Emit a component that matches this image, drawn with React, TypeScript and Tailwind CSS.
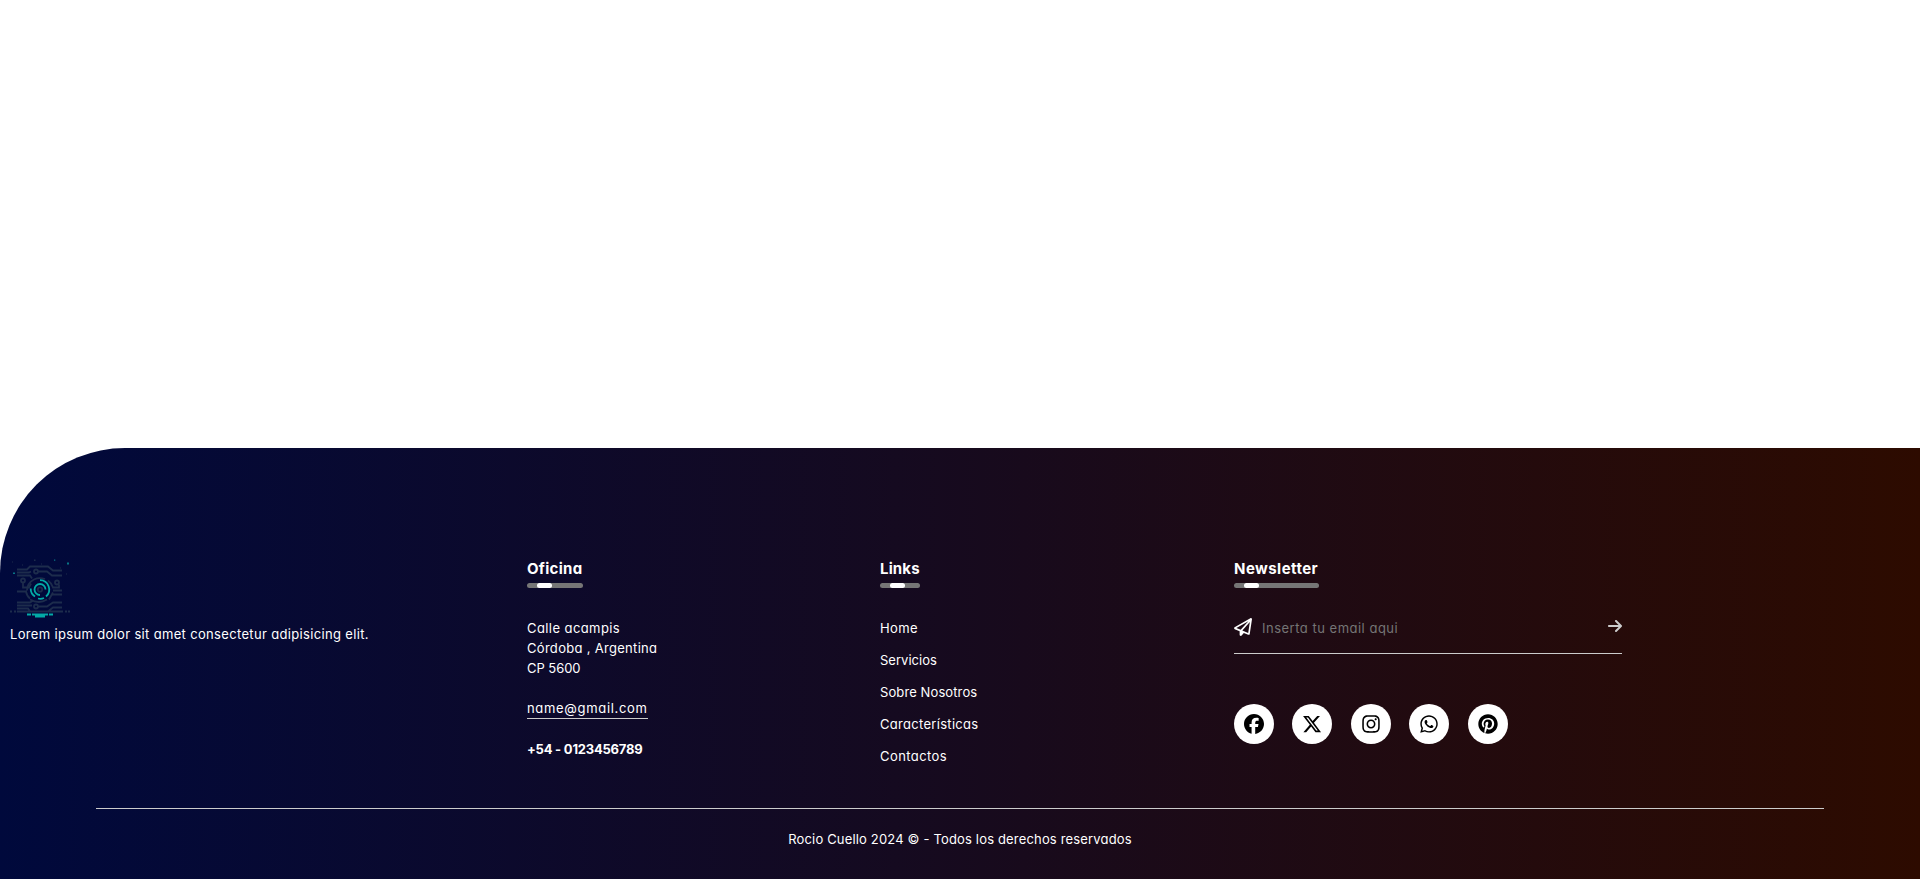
import { FaArrowRight, FaFacebook, FaInstagram, FaPinterest, FaRegPaperPlane, FaWhatsapp, FaXTwitter } from "react-icons/fa6";

const links = [
  { label: "Home", style: "tracking-[0.4px]" },
  { label: "Servicios", style: "tracking-[0.03px]" },
  { label: "Sobre Nosotros", style: "tracking-[0.1px]" },
  { label: "Características", style: "tracking-[0.3px]" },
  { label: "Contactos", style: "tracking-[0.42px]" },
];

const socials = [
  { name: "facebook", Icon: FaFacebook },
  { name: "x", Icon: FaXTwitter },
  { name: "instagram", Icon: FaInstagram },
  { name: "whatsapp", Icon: FaWhatsapp },
  { name: "pinterest", Icon: FaPinterest },
];

function Logo() {
  return (
    <svg width="60" height="60" viewBox="0 -1.5 60 60" fill="none" strokeWidth="1.8" className="block">
      <g stroke="#1d2c4c">
        <path d="M7 10h10l3-3h18l5 4h9M7 13h12l2-1M28 12h9l5 4h10M7 16h13l2 3" />
        <path d="M17 31a13 13 0 0 1 7-11q5-2.500 11-.5M38 21q4 3 5 7h6v-3M43 31h9M7 32h9q1 5 4 7M42 35h10M20 40q9 5 17 0" />
        <path d="M13 23v5h6l2-4M43 33l-4 7M7 43h13l3-2M7 46h15M7 49h11l2 3M28 47h9l6-4h9M38 52l5-4h9M0 52h2M4 52h2M7 52h46M55 52h2M58 52h2" />
        <circle cx="26" cy="12" r="2" />
        <circle cx="13" cy="21" r="2" />
        <circle cx="47" cy="23" r="2" />
        <circle cx="26" cy="47" r="2" />
        <circle cx="30" cy="30" r="2.200" />
      </g>
      <g stroke="#03aaa6">
        <path d="M30 20.700a9.300 9.300 0 0 1 6 16.300M34 38.500a9.300 9.300 0 0 1-6 .5M25 37a9.300 9.300 0 0 1-4.300-8" />
        <path d="M30 35.500a5.500 5.500 0 1 1 5.500-5.500" />
        <path d="M17 55h4M22 55h16M39 55h4M25 57h10" />
      </g>
      <g fill="#087586">
        <path d="M44 0h1.300v1.300H44zM57 3h2v2h-2zM3 13h2v1.500H3z" />
      </g>
      <path fill="#1d2c4c" d="M2 2h1v1H2zM24 0h1.500v1.500H24zM12 5h1v1h-1zM31 4h1v1h-1zM50 8h1v1h-1zM56 14h1v1h-1z" />
    </svg>
  );
}

function Heading({ text, className }: { text: string; className: string }) {
  return (
    <div className="mb-[30px]">
      <h3 className={`h-[22px] whitespace-nowrap text-[15px] leading-[21px] font-bold ${className}`}>{text}</h3>
      <div className="mt-[3px] flex h-[5px] overflow-hidden rounded-[3px] bg-[#767676] pl-[10px]">
        <span className="h-[5px] w-[15px] rounded-[3px] bg-white" />
      </div>
    </div>
  );
}

export default function App() {
  return (
    <div className="flex h-[879px] flex-col justify-end overflow-hidden bg-white font-['Inter','Liberation_Sans',sans-serif] [font-feature-settings:'cv11']">
      <footer className="h-[431px] w-full rounded-tl-[125px] bg-linear-to-r/srgb from-[#00093c] to-[#2d0b00] pt-[110px] text-[13px] leading-5 text-white">
        <div className="grid h-[250px] grid-cols-[517px_353px_354px_408px]">
          <div className="px-[10px]">
            <Logo />
            <p className="mt-[6px] whitespace-nowrap"><span className="tracking-[0.335px]">Lorem ipsum dolor sit amet consectetur adipisicing elit.</span></p>
          </div>
          <div className="flex flex-col items-start px-[10px] whitespace-nowrap">
            <Heading text="Oficina" className="w-[56px] tracking-[0.3px]" />
            <p><span className="tracking-[0.42px]">Calle acampis</span></p>
            <p><span className="tracking-[0.3px]">Córdoba , Argentina</span></p>
            <p><span className="tracking-[-0.05px]">CP 5600</span></p>
            <p className="mt-5 h-[21px] w-[121px] border-b border-[#ccc]"><span className="tracking-[0.68px]">name@gmail.com</span></p>
            <h4 className="mt-5 font-bold"><span className="tracking-[-0.22px]">+54 - 0123456789</span></h4>
          </div>
          <div className="flex flex-col items-start px-[10px] whitespace-nowrap">
            <Heading text="Links" className="w-[40px] tracking-[0.15px]" />
            <ul className="flex flex-col gap-3">
              {links.map((l) => (
                <li key={l.label} className="h-5"><span className={l.style}>{l.label}</span></li>
              ))}
            </ul>
          </div>
          <div className="flex flex-col items-start px-[10px]">
            <Heading text="Newsletter" className="w-[85px] tracking-[0.45px]" />
            <form className="flex h-[36px] w-[388px] items-start border-b border-[#ccc]">
              <FaRegPaperPlane className="size-[18px] shrink-0" />
              <span className="ml-[10px] grow text-[#757575]"><span className="tracking-[0.5px]">Inserta tu email aqui</span></span>
              <FaArrowRight className="h-4 w-[14px] text-[#ccc]" />
            </form>
            <div className="mt-[50px] flex gap-[18.4px]">
              {socials.map(({ name, Icon }) => (
                <span key={name} className="flex size-10 items-center justify-center rounded-full bg-white text-black">
                  <Icon className="size-5" />
                </span>
              ))}
            </div>
          </div>
        </div>
        <hr className="mx-auto w-[90%] border-t border-[#ccc]" />
        <p className="mt-5 text-center"><span className="tracking-[0.165px]">Rocio Cuello 2024 © - Todos los derechos reservados</span></p>
      </footer>
    </div>
  );
}
